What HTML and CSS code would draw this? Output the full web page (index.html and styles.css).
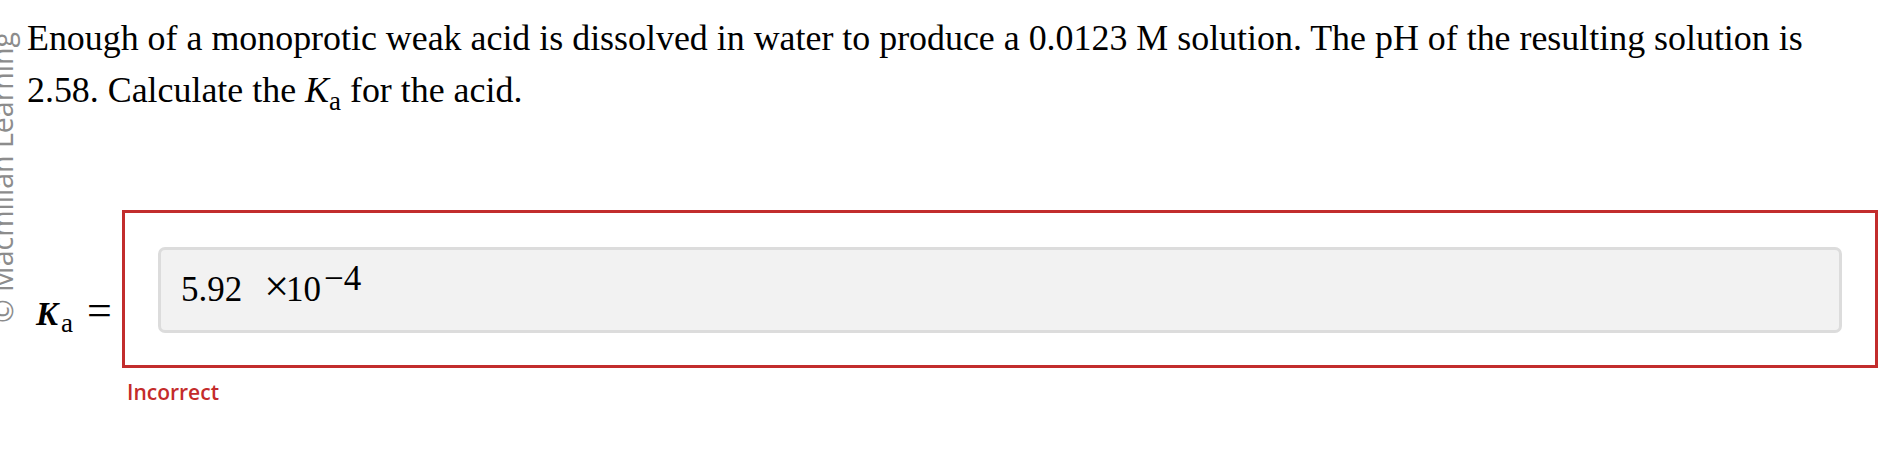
FILE: index.html
```html
<!DOCTYPE html>
<html>
<head>
<meta charset="utf-8">
<link rel="stylesheet" href="styles.css">
</head>
<body>
<div class="watermark">© Macmillan Learning</div>
<div class="page">
  <p class="question">Enough of a monoprotic weak acid is dissolved in water to produce a 0.0123&nbsp;M solution. The pH of the resulting solution is 2.58. Calculate the <span class="k">K</span><sub class="sub">a</sub> for the acid.</p>
  <div class="answer-row">
    <div class="label"><span class="kb">K</span><sub class="lsub">a</sub><span class="eq">=</span></div>
    <div class="answer-col">
      <div class="answer-box">
        <div class="input"><span class="val">5.92</span><span class="times">×</span><span class="ten">10</span><sup class="exp">−4</sup></div>
      </div>
      <div class="feedback">Incorrect</div>
    </div>
  </div>
</div>
</body>
</html>
```

FILE: styles.css
```css
html, body {
  margin: 0;
  padding: 0;
  background: #ffffff;
}
body {
  width: 1896px;
  height: 472px;
  overflow: hidden;
  position: relative;
  font-family: "Liberation Serif", "Times New Roman", serif;
  color: #000;
}
.watermark {
  position: absolute;
  left: -8px;
  top: 323px;
  transform-origin: 0 0;
  transform: rotate(-90deg);
  font-family: "Open Sans", sans-serif;
  font-size: 28.5px;
  line-height: 21px;
  color: #8c8c8c;
  white-space: nowrap;
}
.page {
  padding-left: 27px;
}
.question {
  margin: 0;
  padding-top: 12px;
  font-size: 35.9px;
  line-height: 52px;
  width: 1830px;
}
.k {
  font-style: italic;
}
.sub {
  font-size: 0.75em;
  vertical-align: -0.3em;
  line-height: 0;
}
.answer-row {
  display: flex;
  align-items: flex-start;
  margin-top: 94px;
}
.label {
  width: 95px;
  padding-left: 9px;
  box-sizing: border-box;
  padding-top: 83px;
  font-size: 33px;
  line-height: 36px;
  white-space: nowrap;
}
.kb {
  font-weight: bold;
  font-style: italic;
}
.lsub {
  font-size: 27px;
  vertical-align: -7px;
  line-height: 0;
  margin-left: 3px;
  margin-right: 14px;
}
.eq {
  font-size: 44px;
}
.answer-col {
  display: flex;
  flex-direction: column;
}
.answer-box {
  width: 1756px;
  height: 158px;
  box-sizing: border-box;
  border: 3px solid #c22d2d;
  padding: 34px 33px;
}
.input {
  height: 86px;
  box-sizing: border-box;
  border: 3px solid #dcdcdc;
  border-radius: 7px;
  background: #f2f2f2;
  padding: 17px 0 0 20px;
  font-size: 35px;
  line-height: 40px;
  white-space: nowrap;
}
.val {
  margin-right: 22px;
}
.times {
  font-size: 44px;
  margin-right: -3px;
}
.exp {
  font-size: 35px;
  vertical-align: 11px;
  line-height: 0;
  margin-left: 3px;
}
.feedback {
  margin-top: 10px;
  padding-left: 5px;
  font-family: "Open Sans", sans-serif;
  font-weight: 600;
  font-size: 21px;
  line-height: 28px;
  color: #c42b2b;
}
```
